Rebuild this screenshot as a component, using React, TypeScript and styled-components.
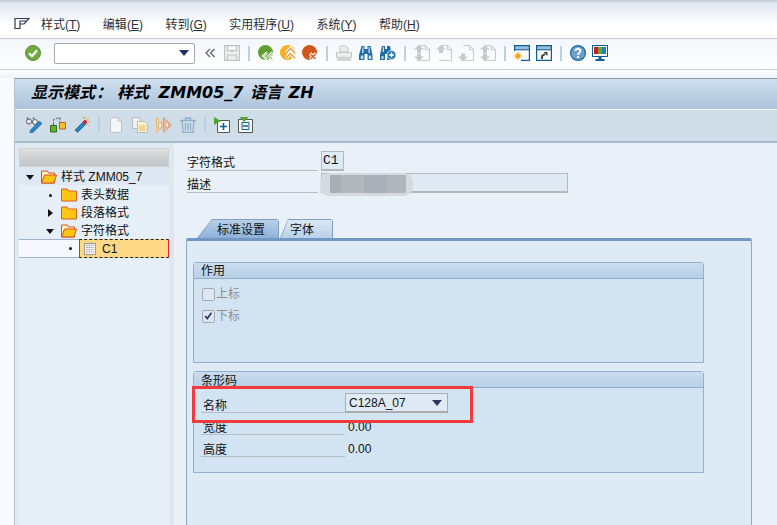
import React from 'react';
import styled, { createGlobalStyle } from 'styled-components';

const GlobalStyle = createGlobalStyle`
  html, body { margin: 0; padding: 0; background: #f7f9fc; }
  * { box-sizing: border-box; }
`;

const CJK = '"Liberation Sans", "Noto Sans CJK SC", sans-serif';

const Screen = styled.div`
  position: relative;
  width: 777px;
  height: 525px;
  overflow: hidden;
  background: #f8fafd;
  font: 12px/16px ${CJK};
  color: #111;
`;

const MenuBar = styled.div`
  display: flex;
  align-items: center;
  height: 39px;
  padding: 8px 0 0 14px;
  border-top: 2px solid #c9cdd6;
  border-bottom: 1px solid #c8ccd3;
  background: linear-gradient(#dfe5ef, #fff 62%);
`;

const MenuItem = styled.span`
  margin-right: 22.5px;
  padding-top: 2px;
  color: #2a2f3a;
  white-space: nowrap;
  &:first-of-type { margin-left: 11px; }
  u { text-underline-offset: 1px; }
`;

const SystemBar = styled.div`
  display: flex;
  align-items: center;
  gap: 6px;
  height: 31px;
  padding: 0 0 2px 25px;
  border-bottom: 1px solid #c8ccd3;
  background: linear-gradient(#f3f6fb, #fff);
`;

const CommandField = styled.div`
  display: flex;
  align-items: center;
  justify-content: flex-end;
  width: 141px;
  height: 21px;
  margin: 0 1px 0 7px;
  padding-right: 5px;
  background: #fff;
  border: 1px solid #a9a9a9;
  border-radius: 2px;
`;

const Arrow = styled.i<{ $color?: string }>`
  display: block;
  width: 0;
  height: 0;
  border-left: 5px solid transparent;
  border-right: 5px solid transparent;
  border-top: 6px solid ${(p) => p.$color || '#1f3263'};
`;

const BarSep = styled.i`
  display: block;
  width: 2px;
  height: 15px;
  margin: 0 2px;
  background: #bdd0e2;
`;

const AppSep = styled(BarSep)`
  margin: 0;
`;

const Spacer = styled.div`
  height: 8px;
  background: linear-gradient(#fff, #edf1f6);
`;

const Content = styled.div`
  margin-left: 14px;
  border-left: 1px solid #b5c3d1;
  border-top: 1px solid #8d99a8;
`;

const TitleBar = styled.div`
  height: 31px;
  padding-left: 16px;
  background: linear-gradient(#cfe0ef, #acc3da);
  border-bottom: 1px solid #edf3f9;
  font: italic bold 16px/28px "DejaVu Sans", "Noto Sans CJK SC", sans-serif;
  word-spacing: 1px;
  color: #000;
  white-space: pre;
`;

const TitleColon = styled.span`
  margin: 0 5px 0 1px;
`;

const TitleObject = styled.span`
  margin-right: 3px;
`;

const AppBar = styled.div`
  display: flex;
  align-items: center;
  gap: 8px;
  height: 33px;
  padding: 0 0 2px 11px;
  background: #cfdde8;
  border-bottom: 2px solid #a9bccd;
`;

const Body = styled.div`
  display: flex;
  height: 382px;
`;

const TreePane = styled.div`
  width: 155px;
  padding: 5px 1px 0 4px;
  background: #dfe9f1;
`;

const TreeHead = styled.div`
  height: 19px;
  background: linear-gradient(#dedfdf, #c0c4c6);
  border: 1px solid #cfd2d4;
`;

const TreeBody = styled.div`
  height: 100%;
  background: #e6eff7;
`;

const TreeRow = styled.div<{ $level: number; $tint?: boolean }>`
  display: flex;
  align-items: center;
  height: 18px;
  padding: 2px 0 0 ${(p) => 3 + p.$level * 20}px;
  white-space: nowrap;
  background: ${(p) => (p.$tint ? '#dde8f3' : 'transparent')};
`;

const CurrentRow = styled(TreeRow)`
  height: 19px;
  padding-top: 0;
  background: #f5f8fc;
  border-top: 1px solid #9db4cb;
  border-bottom: 1px solid #9db4cb;
`;

const Twisty = styled.span`
  display: flex;
  align-items: center;
  justify-content: center;
  flex: none;
  width: 16px;
  margin-right: 3px;
`;

const TreeIcon = styled.span`
  display: flex;
  flex: none;
  margin-right: 4px;
`;

const Dot = styled.i`
  width: 3px;
  height: 3px;
  border-radius: 50%;
  background: #111;
`;

const DownTip = styled.i`
  border-left: 4px solid transparent;
  border-right: 4px solid transparent;
  border-top: 5px solid #111;
`;

const RightTip = styled.i`
  border-top: 4px solid transparent;
  border-bottom: 4px solid transparent;
  border-left: 5px solid #111;
`;

const Selected = styled.div`
  display: flex;
  align-items: center;
  flex: 1;
  height: 19px;
  margin: -1px 0 -1px -2px;
  padding-left: 4px;
  gap: 6px;
  background: #fdd985;
  border: 1px dashed #222;
  border-left: 1px solid #e3262b;
  border-right: 1px solid #e3262b;
`;

const Splitter = styled.div`
  width: 4px;
  background: #dde7ee;
`;

const MainPane = styled.div`
  flex: 1;
  padding: 8px 25px 0 12px;
  background: #e9f0f7;
`;

const FieldRow = styled.div`
  display: flex;
  height: 20px;
  margin: 0 0 2px 1px;
`;

const GroupRow = styled(FieldRow)`
  margin-left: 0;
`;

const FieldLabel = styled.div`
  width: 131px;
  margin-right: 3px;
  padding-top: 4px;
  border-bottom: 1px solid #b9bdc1;
`;

const GroupLabel = styled(FieldLabel)`
  width: 144px;
  margin-right: 0;
  padding: 5px 0 0 2px;
`;

const TextField = styled.div<{ $width: number; $mono?: boolean }>`
  position: relative;
  width: ${(p) => p.$width}px;
  height: 20px;
  padding-left: 1px;
  background: #dfeaf4;
  border: 2px solid #b4b8bb;
  border-width: 1px 1px 2px 1px;
  font-family: ${(p) => (p.$mono ? '"Liberation Mono", monospace' : CJK)};
  font-size: ${(p) => (p.$mono ? 13 : 12)}px;
  line-height: 18px;
`;

const Redaction = styled.div`
  position: absolute;
  left: -2px;
  top: -1px;
  width: 93px;
  height: 23px;
  padding: 2px 7px 3px 10px;
  background: #d4dae0;
  border-radius: 9px;
`;

const RedactionCore = styled.div`
  height: 100%;
  background: linear-gradient(90deg, #a8aeb5 0 15%, #b2b8be 15% 45%, #a9afb6 45% 75%, #b0b6bc 75%);
`;

const TabStrip = styled.div`
  display: flex;
  height: 19px;
  margin-top: 26px;
  padding-left: 11px;
`;

const Tab = styled.div<{ $active?: boolean; $width: number }>`
  position: relative;
  width: ${(p) => p.$width}px;
  height: 19px;
  margin-right: 1px;
  padding-left: ${(p) => (p.$active ? 20 : 10)}px;
  line-height: 22px;
  background: #7f9fc4;
  clip-path: polygon(0 100%, ${(p) => (p.$active ? 15 : 8)}px 0, calc(100% - 2px) 0, 100% 2px, 100% 100%);
  &::before {
    content: '';
    position: absolute;
    inset: 1px 1px 0 1px;
    background: ${(p) =>
      p.$active ? 'linear-gradient(#b8d0e8, #8fb1d8)' : 'linear-gradient(#dbe7f3, #b9d0e7)'};
    clip-path: polygon(0 100%, ${(p) => (p.$active ? 14 : 7)}px 0, 100% 0, 100% 100%);
  }
  span { position: relative; }
`;

const TabPanel = styled.div`
  height: 300px;
  padding: 21px 47px 0 6px;
  background: #deeaf4;
  border: 1px solid #8fa9c8;
  border-top: 3px solid #7197c3;
  border-radius: 2px 2px 0 0;
`;

const Group = styled.section<{ $height: number }>`
  height: ${(p) => p.$height}px;
  margin-bottom: 8px;
  background: #d2e4f2;
  border: 1px solid #94b0cf;
  border-radius: 3px 3px 0 0;
`;

const GroupTitle = styled.div<{ $low?: boolean }>`
  height: 16px;
  padding-left: 7px;
  line-height: ${(p) => (p.$low ? 18 : 17)}px;
  background: linear-gradient(#cbdcee, #b8cfe6);
  border-bottom: 1px solid #8fadd0;
`;

const CheckList = styled.div`
  display: flex;
  flex-direction: column;
  gap: 8px;
  padding: 8px 0 0 8px;
`;

const CheckRow = styled.label`
  display: flex;
  align-items: center;
  gap: 1px;
  height: 14px;
  color: #8c8f92;
`;

const CheckBox = styled.span`
  display: flex;
  width: 13px;
  height: 13px;
  background: #dbe7f2;
  border: 1px solid #a4a8ac;
  border-radius: 2px;
`;

const GroupRows = styled.div`
  padding: 5px 7px 0;
`;

const Dropdown = styled.div`
  display: flex;
  align-items: center;
  justify-content: space-between;
  width: 103px;
  height: 20px;
  padding: 0 5px 0 3px;
  background: #dfeaf4;
  border: 1px solid #a9adb0;
  border-bottom-width: 2px;
`;

const ValueText = styled.div`
  padding: 4px 0 0 3px;
`;

const Annotation = styled.div`
  position: absolute;
  left: 192px;
  top: 386px;
  width: 281px;
  height: 37px;
  border: 3px solid #f23a3a;
  pointer-events: none;
`;

const Svg = styled.svg`
  display: block;
  flex: none;
  width: 16px;
  height: 16px;
`;

const FormSvg = styled(Svg)`
  width: 12px;
`;

const TickSvg = styled(Svg)`
  width: 11px;
  height: 11px;
`;

const MenuGlyph = () => (
  <Svg viewBox="0 0 16 16" fill="none" stroke="#2f3c58" strokeWidth="1.2">
    <path d="M1 2.500h14L10 8H6v4.500H1zM6 8V5h6" />
  </Svg>
);

const OkIcon = () => (
  <Svg viewBox="0 0 16 16">
    <circle cx="8" cy="8" r="7.500" fill="#6fab3b" stroke="#5c8a3a" />
    <path d="M4 8.200l3 3 5-6" fill="none" stroke="#fff" strokeWidth="2.200" />
  </Svg>
);

const Chevrons = () => (
  <Svg viewBox="0 0 16 16" fill="none" stroke="#5f6269" strokeWidth="1.300">
    <path d="M8 4L4 8l4 4M12.500 4l-4 4 4 4" />
  </Svg>
);

const SaveIcon = () => (
  <Svg viewBox="0 0 16 16" fill="#eceef0" stroke="#c2c4c6" strokeWidth="1.200">
    <path d="M.6.6h14.800v14.800H.6zM3.500.6v5h9v-5M3.500 15.400V10h9v5.400" />
  </Svg>
);

const BackIcon = () => (
  <Svg viewBox="0 0 16 16">
    <circle cx="7.500" cy="7.500" r="7.500" fill="#5f9f2f" />
    <path d="M9 7.500L5.500 11 9 14.500M14.500 7.500L11 11l3.500 3.500" fill="none" stroke="#fff" strokeWidth="2.800" />
    <path d="M9 7.500L5.500 11 9 14.500M14.500 7.500L11 11l3.500 3.500" fill="none" stroke="#5f9f2f" strokeWidth=".8" />
  </Svg>
);

const ExitIcon = () => (
  <Svg viewBox="0 0 16 16">
    <circle cx="7.500" cy="7.500" r="7.500" fill="#f7ae1f" />
    <path d="M6 8l4.500-4.500L15 8M6 13l4.500-4.500L15 13" fill="none" stroke="#fff" strokeWidth="3.400" />
    <path d="M6 8l4.500-4.500L15 8M6 13l4.500-4.500L15 13" fill="none" stroke="#ec8b2c" strokeWidth="1.200" />
  </Svg>
);

const CancelIcon = () => (
  <Svg viewBox="0 0 16 16">
    <circle cx="7.500" cy="7.500" r="7.500" fill="#d3531c" />
    <path d="M8 8.500l6 6M14 8.500l-6 6" stroke="#fff" strokeWidth="3.400" />
    <path d="M8.500 9l5 5M13.500 9l-5 5" stroke="#c9552a" strokeWidth="1.200" />
  </Svg>
);

const PrintIcon = () => (
  <Svg viewBox="0 0 16 16" fill="#eceef0" stroke="#c4c6c8">
    <path d="M4 1h6l2 2v4H4zM.5 7.500h15v5H.5z" />
    <path d="M1 14.500h14" strokeWidth="2" />
  </Svg>
);

const FindIcon = () => (
  <Svg viewBox="0 0 16 16">
    <path d="M3.500 1h3v3h3V1h3l2 9v5H9.500V9h-3v6H1v-5z" fill="#1d6ea6" />
    <path d="M2.800 10.500h2.400V14H2.800zM10.800 10.500h2.400V14h-2.400zM4.500 2h1v6H4zM10.500 2h1l.5 6h-1.500z" fill="#cfe0ee" />
  </Svg>
);

const FindMoreIcon = () => (
  <Svg viewBox="0 0 16 16">
    <path d="M2 1h3v3h2V1h3l1 5v9H7V9H5v6H0v-5z" fill="#1d6ea6" />
    <path d="M1.500 11h2v3h-2zM3 2h1v5H2.500z" fill="#cfe0ee" />
    <circle cx="11.500" cy="10" r="4.500" fill="#1d6ea6" stroke="#e6eef6" />
    <path d="M11.500 7.500v5M9 10h5" stroke="#fff" strokeWidth="1.600" />
  </Svg>
);

const PageMove = ({ up, down }: { up?: boolean; down?: boolean }) => (
  <Svg viewBox="0 0 16 16">
    <path d="M5 .6h6.500l4 4v10.800H3" fill="none" stroke="#c6c8ca" />
    <path d="M11.500 .6v4h4" fill="none" stroke="#c6c8ca" />
    {up && <path d="M5 0l5 4.500H7V8H3V4.500H0z" fill="#c6c8ca" />}
    {down && <path d="M5 16l5-4.500H7v-3H3v3H0z" fill="#c6c8ca" />}
  </Svg>
);

const WindowFrame = ({ children, open }: { children: React.ReactNode; open?: boolean }) => (
  <Svg viewBox="0 0 16 16">
    <path d="M0 0h16v5H0z" fill="#9dbcdc" />
    <path
      d={open ? 'M.6 6V.6h14.800v14.800H7' : 'M.6.6h14.800v14.800H.6z'}
      fill="none"
      stroke="#0d5f92"
      strokeWidth="1.200"
    />
    <path d="M0 4.800h16" stroke="#0d5f92" />
    {children}
  </Svg>
);

const HelpIcon = () => (
  <Svg viewBox="0 0 16 16">
    <circle cx="8" cy="8" r="7.400" fill="#6e9fd0" stroke="#176a9c" strokeWidth="1.200" />
    <path d="M5.600 6c0-3 4.800-3 4.800 0 0 2-2.400 1.800-2.400 4" fill="none" stroke="#fff" strokeWidth="1.800" />
    <path d="M7 11h2v2H7z" fill="#fff" />
  </Svg>
);

const MonitorIcon = () => (
  <Svg viewBox="0 0 16 16">
    <path d="M0 0h16v12H0z" fill="#0d5f92" />
    <path d="M1 1h14v10H1z" fill="#fff" />
    <path d="M2 2h4v7H2z" fill="#d7141a" />
    <path d="M6 2h4v7H6z" fill="#6aa52f" />
    <path d="M10 2h4v7h-4z" fill="#1e7fbd" />
    <path d="M6.500 12h3v2h3v2h-9v-2h3z" fill="#0d5f92" />
  </Svg>
);

const GlassesPen = () => (
  <Svg viewBox="0 0 16 16">
    <circle cx="3" cy="4.500" r="2.500" fill="#f2f5f8" stroke="#555" />
    <circle cx="9" cy="5" r="2.500" fill="#f2f5f8" stroke="#555" />
    <path d="M5.500 4.500h1M1 2l1-2M7 2l1-2" stroke="#555" fill="none" />
    <path d="M13.500 4L16 6.500 7 15.500l-3 .5.500-3z" fill="#2b84bf" stroke="#185f90" strokeWidth=".6" />
  </Svg>
);

const LinkedSquares = () => (
  <Svg viewBox="0 0 16 16">
    <path d="M3.500 8V2.500L10 .5V5" fill="none" stroke="#666" strokeDasharray="3 1" />
    <path d="M.5 8.500h6V15h-6z" fill="#6fa92f" stroke="#2f6d1d" />
    <path d="M9.500 5.500h6V12h-6z" fill="#f6c12c" stroke="#cf5a1d" />
  </Svg>
);

const WandIcon = () => (
  <Svg viewBox="0 0 16 16">
    <path d="M9.500 4.500L12 7 3.500 15.500 1 13z" fill="#2b84bf" stroke="#185f90" strokeWidth=".7" />
    <circle cx="11" cy="5" r="2" fill="#d8232a" />
    <path d="M11 0v2M15 1l-2 2M16 5h-2M9 0l1 2M14.500 8L13 7" stroke="#f2a01e" />
  </Svg>
);

const NewPage = () => (
  <Svg viewBox="0 0 16 16">
    <path d="M2.500.6H10l3.500 3.500v11.300h-11z" fill="#f4f5f6" stroke="#bfc1c3" />
    <path d="M10 .6v3.500h3.500" fill="none" stroke="#bfc1c3" />
  </Svg>
);

const CopyPage = () => (
  <Svg viewBox="0 0 16 16">
    <path d="M.5.500H8v11H.5z" fill="#eef0f2" stroke="#b9bbbd" />
    <path d="M5.500 4.500h7l3 3v8h-10z" fill="#fdf3cf" stroke="#b9bbbd" />
    <path d="M7 9h6.500M7 11h6.500M7 13h6.500" stroke="#e4b75e" />
  </Svg>
);

const RenameIcon = () => (
  <Svg viewBox="0 0 16 16">
    <path d="M.5.500l8 7.500-8 7.500z" fill="#f6d2a2" stroke="#ecb67c" />
    <path d="M7.500.500l8 7.500-8 7.500z" fill="#eebba2" stroke="#dc9878" />
    <path d="M2.500 6h3v5h-3zM9.500 6h3v4h-3z" fill="#f6efe0" stroke="#b59b72" strokeWidth=".6" />
  </Svg>
);

const TrashIcon = () => (
  <Svg viewBox="0 0 16 16" fill="none" stroke="#8fb0c8" strokeWidth="1.300">
    <path d="M0 3.500h16M5.500 3.500V1h5v2.500" />
    <path d="M2 3.500l1 12h10l1-12M5.500 6v7.500M8 6v7.500M10.500 6v7.500" />
  </Svg>
);

const ExpandIcon = () => (
  <Svg viewBox="0 0 16 16">
    <path d="M3.500 3.500h12v12h-12z" fill="#f7f9fb" stroke="#555" />
    <path d="M6 9.500h7M9.500 6v7" stroke="#0d5f92" strokeWidth="1.500" />
    <path d="M0 0l7 4-7 4z" fill="#4ea62f" />
  </Svg>
);

const CollapseIcon = () => (
  <Svg viewBox="0 0 16 16">
    <path d="M.5 2.500h14v13H.5z" fill="#f7f9fb" stroke="#555" />
    <path d="M4 5.500h7v7H4z" fill="none" stroke="#0d5f92" />
    <path d="M5 9h5" stroke="#0d5f92" strokeWidth="1.500" />
    <path d="M1.500 0h9L6 5z" fill="#4ea62f" />
  </Svg>
);

const FolderClosed = () => (
  <Svg viewBox="0 0 16 16">
    <path d="M.5 2h6l1 2h8v10H.5z" fill="#ffc414" stroke="#d8641c" />
  </Svg>
);

const FolderOpen = () => (
  <Svg viewBox="0 0 16 16">
    <path d="M.5 2h6l1 2h6v10H.5z" fill="#fff1c4" stroke="#d2541e" />
    <path d="M.5 14l3-8h12l-2.500 8z" fill="#ffc414" stroke="#d2541e" />
  </Svg>
);

const FormIcon = () => (
  <FormSvg viewBox="0 0 16 16">
    <path d="M.5.500h15v15H.5z" fill="#f4f5f6" stroke="#777" />
    <path d="M3 3h10M3 6h10M3 9h10M3 12h10" stroke="#777" strokeDasharray="2 1" />
  </FormSvg>
);

const Tick = () => (
  <TickSvg viewBox="0 0 13 13">
    <path d="M2.500 6L5 9l5-7" fill="none" stroke="#2f3a5a" strokeWidth="2" />
  </TickSvg>
);

const menus: [string, string][] = [
  ['样式', 'T'],
  ['编辑', 'E'],
  ['转到', 'G'],
  ['实用程序', 'U'],
  ['系统', 'Y'],
  ['帮助', 'H'],
];

const App = (): JSX.Element => {
  return (
    <Screen>
      <GlobalStyle />
      <MenuBar>
        <MenuGlyph />
        {menus.map(([name, key]) => (
          <MenuItem key={key}>
            {name}(<u>{key}</u>)
          </MenuItem>
        ))}
      </MenuBar>
      <SystemBar>
        <OkIcon />
        <CommandField>
          <Arrow />
        </CommandField>
        <Chevrons />
        <SaveIcon />
        <BarSep />
        <BackIcon />
        <ExitIcon />
        <CancelIcon />
        <BarSep />
        <PrintIcon />
        <FindIcon />
        <FindMoreIcon />
        <BarSep />
        <PageMove up down />
        <PageMove up />
        <PageMove down />
        <PageMove up down />
        <BarSep />
        <WindowFrame open>
          <circle cx="4" cy="11" r="2.500" fill="#f9a61a" />
          <path d="M4 7v8M0 11h8M1.500 8.500l5 5M6.500 8.500l-5 5" stroke="#f9a61a" />
        </WindowFrame>
        <WindowFrame>
          <path d="M6 14v-3l3-2" fill="none" stroke="#444" strokeWidth="2" />
          <path d="M7.500 7h4v4z" fill="#444" />
        </WindowFrame>
        <BarSep />
        <HelpIcon />
        <MonitorIcon />
      </SystemBar>
      <Spacer />
      <Content>
        <TitleBar>
          显示模式<TitleColon>：</TitleColon>
          <TitleObject>样式</TitleObject> ZMM05_7 语言 ZH
        </TitleBar>
        <AppBar>
          <GlassesPen />
          <LinkedSquares />
          <WandIcon />
          <AppSep />
          <NewPage />
          <CopyPage />
          <RenameIcon />
          <TrashIcon />
          <AppSep />
          <ExpandIcon />
          <CollapseIcon />
        </AppBar>
        <Body>
          <TreePane>
            <TreeHead />
            <TreeBody>
              <TreeRow $level={0} $tint>
                <Twisty><DownTip /></Twisty>
                <TreeIcon><FolderOpen /></TreeIcon>
                样式 ZMM05_7
              </TreeRow>
              <TreeRow $level={1}>
                <Twisty><Dot /></Twisty>
                <TreeIcon><FolderClosed /></TreeIcon>
                表头数据
              </TreeRow>
              <TreeRow $level={1}>
                <Twisty><RightTip /></Twisty>
                <TreeIcon><FolderClosed /></TreeIcon>
                段落格式
              </TreeRow>
              <TreeRow $level={1}>
                <Twisty><DownTip /></Twisty>
                <TreeIcon><FolderOpen /></TreeIcon>
                字符格式
              </TreeRow>
              <CurrentRow $level={2}>
                <Twisty><Dot /></Twisty>
                <Selected>
                  <FormIcon />
                  C1
                </Selected>
              </CurrentRow>
            </TreeBody>
          </TreePane>
          <Splitter />
          <MainPane>
            <FieldRow>
              <FieldLabel>字符格式</FieldLabel>
              <TextField $width={23} $mono>C1</TextField>
            </FieldRow>
            <FieldRow>
              <FieldLabel>描述</FieldLabel>
              <TextField $width={247}>
                <Redaction>
                  <RedactionCore />
                </Redaction>
              </TextField>
            </FieldRow>
            <TabStrip>
              <Tab $active $width={82}><span>标准设置</span></Tab>
              <Tab $width={53}><span>字体</span></Tab>
            </TabStrip>
            <TabPanel>
              <Group $height={101}>
                <GroupTitle>作用</GroupTitle>
                <CheckList>
                  <CheckRow>
                    <CheckBox />
                    上标
                  </CheckRow>
                  <CheckRow>
                    <CheckBox><Tick /></CheckBox>
                    下标
                  </CheckRow>
                </CheckList>
              </Group>
              <Group $height={102}>
                <GroupTitle $low>条形码</GroupTitle>
                <GroupRows>
                  <GroupRow>
                    <GroupLabel>名称</GroupLabel>
                    <Dropdown>
                      C128A_07
                      <Arrow $color="#2b3a63" />
                    </Dropdown>
                  </GroupRow>
                  <GroupRow>
                    <GroupLabel>宽度</GroupLabel>
                    <ValueText>0.00</ValueText>
                  </GroupRow>
                  <GroupRow>
                    <GroupLabel>高度</GroupLabel>
                    <ValueText>0.00</ValueText>
                  </GroupRow>
                </GroupRows>
              </Group>
            </TabPanel>
          </MainPane>
        </Body>
      </Content>
      <Annotation />
    </Screen>
  );
};

export default App;
